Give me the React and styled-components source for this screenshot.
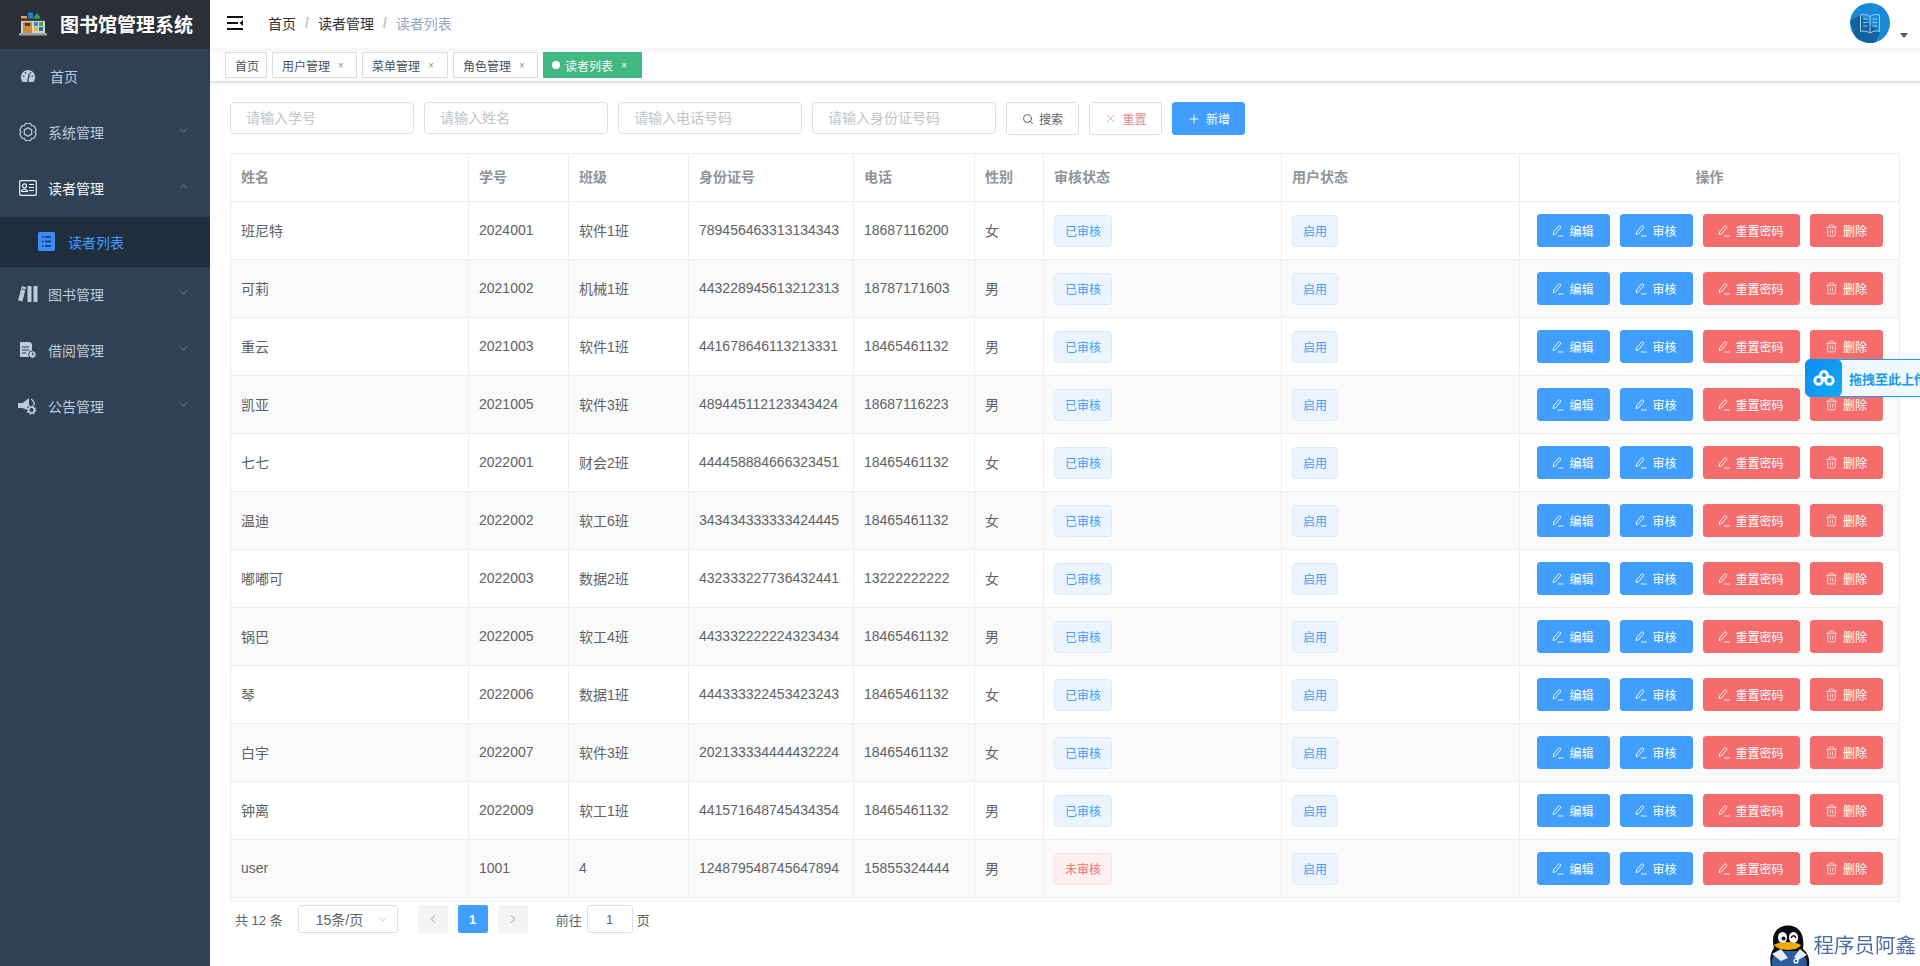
import React from "react";
import styled, { createGlobalStyle } from "styled-components";
import { ChevronDown, ChevronUp, ChevronLeft, ChevronRight, Search, X, Plus, Trash2 } from "lucide-react";

const GlobalStyle = createGlobalStyle`
  html, body {
    margin: 0;
    padding: 0;
    height: 100%;
    overflow: hidden;
    background: #fff;
    font-family: "Liberation Sans", "Noto Sans CJK SC", sans-serif;
  }
  * {
    box-sizing: border-box;
  }
`;

const readers = [
  ["班尼特", "2024001", "软件1班", "789456463313134343", "18687116200", "女", true],
  ["可莉", "2021002", "机械1班", "443228945613212313", "18787171603", "男", true],
  ["重云", "2021003", "软件1班", "441678646113213331", "18465461132", "男", true],
  ["凯亚", "2021005", "软件3班", "489445112123343424", "18687116223", "男", true],
  ["七七", "2022001", "财会2班", "444458884666323451", "18465461132", "女", true],
  ["温迪", "2022002", "软工6班", "343434333333424445", "18465461132", "女", true],
  ["嘟嘟可", "2022003", "数据2班", "432333227736432441", "13222222222", "女", true],
  ["锅巴", "2022005", "软工4班", "443332222224323434", "18465461132", "男", true],
  ["琴", "2022006", "数据1班", "444333322453423243", "18465461132", "女", true],
  ["白宇", "2022007", "软件3班", "202133334444432224", "18465461132", "女", true],
  ["钟离", "2022009", "软工1班", "441571648745434354", "18465461132", "男", true],
  ["user", "1001", "4", "124879548745647894", "15855324444", "男", false],
];

const columns = [
  ["姓名", 238],
  ["学号", 100],
  ["班级", 120],
  ["身份证号", 165],
  ["电话", 121],
  ["性别", 69],
  ["审核状态", 238],
  ["用户状态", 238],
  ["操作", 379],
];

const LogoIcon = () => (
  <svg width="30" height="24" viewBox="0 0 30 24">
    <rect x="3" y="4" width="6" height="2.5" fill="#e8a23a" />
    <rect x="10" y="0.5" width="5" height="6" fill="#2a7fc4" />
    <path d="M15 6.5 L19 1 L23 6.5 Z" fill="#2fa56b" />
    <rect x="3" y="8" width="24" height="13" fill="#d8d2c2" />
    <rect x="3" y="7" width="24" height="2" fill="#3c3c3c" />
    <rect x="5" y="10" width="9" height="11" fill="#c98a3f" />
    <rect x="7" y="11" width="5" height="3" fill="#4b3a2a" />
    <rect x="16" y="10" width="4" height="4" fill="#2a8fd0" />
    <rect x="21" y="10" width="4" height="4" fill="#3fa566" />
    <rect x="16" y="15" width="4" height="4" fill="#e4b53c" />
    <rect x="21" y="15" width="4" height="4" fill="#2a6fb0" />
    <rect x="1" y="21" width="28" height="2.5" fill="#9aa0a6" />
  </svg>
);

const DashboardIcon = () => (
  <svg width="18" height="18" viewBox="0 0 18 18">
    <path d="M3.6 15 A7.2 7.2 0 1 1 14.4 15 Z" fill="#bfcbd9" />
    <path d="M8.6 15 L10.4 7 M4 9 L5.4 9.600 M14 9 L12.600 9.600 M6 5.400 L6.900 6.600 M12 5.400 L11.100 6.600" stroke="#304156" strokeWidth="1.3" />
  </svg>
);

const GearIcon = () => (
  <svg width="18" height="20" viewBox="0 0 18 20" fill="none" stroke="#bfcbd9" strokeWidth="1.2">
    <path d="M6.500 1.500 H11.500 L12.700 3.600 L15.200 3.900 L17.200 8 L16 10 L17.200 12 L15.200 16.100 L12.700 16.400 L11.500 18.500 H6.500 L5.300 16.400 L2.800 16.100 L0.800 12 L2 10 L0.800 8 L2.800 3.900 L5.300 3.600 Z" />
    <path d="M9 5.800 L12.700 7.900 V12.100 L9 14.200 L5.300 12.100 V7.900 Z" />
  </svg>
);

const CardIcon = () => (
  <svg width="18" height="16" viewBox="0 0 18 16" fill="none" stroke="#eef1f5" strokeWidth="1.2">
    <rect x="0.7" y="0.7" width="16.6" height="14.6" rx="1" />
    <circle cx="5.5" cy="5.8" r="2" />
    <path d="M2.5 11.5 C3 8.5 8 8.5 8.5 11.5 Z M10 4.5 H15 M10 7.5 H15 M10 10.5 H15" />
  </svg>
);

const ListIcon = () => (
  <svg width="17" height="19" viewBox="0 0 17 19">
    <rect width="17" height="19" rx="1.5" fill="#3a8bff" />
    <path d="M4 5 H5.5 M7 5 H13 M4 9.5 H5.5 M7 9.5 H13 M4 14 H5.5 M7 14 H13" stroke="#1f2d3d" strokeWidth="1.3" />
  </svg>
);

const BooksIcon = () => (
  <svg width="20" height="18" viewBox="0 0 20 18" fill="#bfcbd9">
    <path d="M4 1 L8 2.2 L4.4 16.5 L0 15.2 Z" />
    <rect x="9.5" y="1" width="4" height="16" />
    <rect x="15.5" y="1" width="4" height="16" />
    <path d="M4.2 4 L7 4.8" stroke="#304156" strokeWidth="1" />
  </svg>
);

const BorrowIcon = () => (
  <svg width="18" height="18" viewBox="0 0 18 18">
    <path d="M1 1 H11 L13 3 V16 H1 Z" fill="#bfcbd9" />
    <path d="M3 6 H10 M3 9 H10 M3 12 H7" stroke="#304156" strokeWidth="1.2" />
    <circle cx="13.5" cy="13.5" r="3.8" fill="#bfcbd9" stroke="#304156" strokeWidth="1" />
    <path d="M13.5 11.5 V13.7 H15.5" stroke="#304156" strokeWidth="0.9" fill="none" />
  </svg>
);

const NoticeIcon = () => (
  <svg width="20" height="18" viewBox="0 0 20 18">
    <path d="M0 6 H4.500 L11 1 V14 L4.500 11 H0 Z" fill="#bfcbd9" />
    <path d="M13 2 C15.500 3.500 16.500 6 16 8.500" stroke="#bfcbd9" strokeWidth="1.300" fill="none" />
    <circle cx="13.500" cy="13" r="5" fill="#304156" />
    <circle cx="13.500" cy="13" r="2.900" fill="none" stroke="#bfcbd9" strokeWidth="1.700" />
    <circle cx="13.500" cy="13" r="4.200" fill="none" stroke="#bfcbd9" strokeWidth="1.300" strokeDasharray="1.600 1.700" />
  </svg>
);

const FoldIcon = () => (
  <svg width="17" height="14" viewBox="0 0 17 14">
    <path d="M0 1 H16 M0 7 H11 M0 13 H16" stroke="#111" strokeWidth="2" />
    <path d="M16 4 L12.5 7 L16 10 Z" fill="#111" />
  </svg>
);

const BookAvatar = () => (
  <svg width="40" height="40" viewBox="0 0 40 40">
    <defs>
      <clipPath id="avatar-clip">
        <circle cx="20" cy="20" r="20" />
      </clipPath>
    </defs>
    <circle cx="20" cy="20" r="20" fill="#1a8ad8" />
    <path d="M10 12 L30 30 L24 42 L6 36 L0 18 Z" fill="#14619e" clipPath="url(#avatar-clip)" />
    <g fill="none" stroke="#a9d6f5" strokeWidth="0.9">
      <path d="M10.500 12 C14 11 17 11.500 20 13.500 C23 11.500 26 11 29.500 12 V28.500 C26 27.500 23 28 20 30 C17 28 14 27.500 10.500 28.500 Z M20 13.500 V30" />
      <path d="M13 16 H17.500 M13 19.500 H17.500 M13 23 H17.500 M22.500 16 H27 M22.500 19.500 H27 M22.500 23 H27" />
    </g>
  </svg>
);

const EditIcon = () => (
  <svg width="12" height="12" viewBox="0 0 12 12" fill="none" stroke="#fff" strokeWidth="0.9">
    <path d="M1.2 9.6 L1.6 7 L6.4 1.2 C7 0.6 7.8 0.7 8.3 1.2 C8.8 1.700 8.800 2.300 8.300 3 L3.600 8.800 Z M6 11 H11.500" />
  </svg>
);

const CloudIcon = () => (
  <svg width="22" height="16" viewBox="0 0 22 16" fill="none" stroke="#fff" strokeWidth="2.8">
    <circle cx="5.600" cy="10.500" r="3.800" />
    <circle cx="16.400" cy="10.500" r="3.800" />
    <circle cx="11" cy="5" r="3.500" />
  </svg>
);

const Penguin = () => (
  <svg width="40" height="41" viewBox="0 0 40 41">
    <path d="M1 41 C-1 31 2 26 4 23 C0 8 8 0.500 18 0.500 C29 0.500 35 9 33 24 C38 28 40 34 39 41 Z" fill="#0c0c10" />
    <path d="M2 41 C1 33 4 28 9 26 L29 26 C34 28 37 34 37 41 Z" fill="#2c5c9c" />
    <path d="M2 29 L11 24 L18 33 L11 36 Z M30 24 L37 30 L28 35 L24 32 Z" fill="#e8eef5" />
    <ellipse cx="12.500" cy="12.500" rx="4.500" ry="5.500" fill="#fff" />
    <ellipse cx="23.500" cy="12.500" rx="4.500" ry="5.500" fill="#fff" />
    <circle cx="13.500" cy="13.500" r="2" fill="#111" />
    <path d="M21 13 C22 10 25 10 26 13" stroke="#111" strokeWidth="1.400" fill="none" />
    <path d="M4 20 C9 16 25 16 31 20 C27 26.500 9 26.500 4 20 Z" fill="#f2ab0c" />
    <circle cx="26" cy="36" r="2.600" fill="#fff" />
    <circle cx="26" cy="36" r="1.200" fill="#2c5c9c" />
  </svg>
);

const Layout = styled.div`
  display: flex;
  width: 100%;
  height: 100vh;
  overflow: hidden;
`;

const Sidebar = styled.aside`
  flex: 0 0 210px;
  background: #304156;
`;

const Brand = styled.div`
  display: flex;
  align-items: center;
  height: 49px;
  padding: 0 0 2px 18px;
  gap: 12px;
  background: #2b2f3a;
  color: #fff;
  font-size: 19px;
  font-weight: 700;
  white-space: nowrap;
`;

const MenuItem = styled.div`
  display: flex;
  align-items: center;
  height: 56px;
  padding: 0 0 2px 18px;
  font-size: 14px;
  color: ${(p) => (p.$open ? "#f4f4f5" : "#bfcbd9")};
`;

const MenuIconBox = styled.span`
  display: flex;
  justify-content: center;
  align-items: center;
  width: 20px;
  margin-right: ${(p) => p.$gap || 10}px;
`;

const Arrow = styled.span`
  display: flex;
  margin-left: auto;
  margin-right: 20px;
  color: #8492a3;
  transform: translateY(-2px);
`;

const SubItem = styled.div`
  display: flex;
  align-items: center;
  height: 50px;
  padding: 0 0 1px 38px;
  gap: 13px;
  background: #1f2d3d;
  color: #409eff;
  font-size: 14px;
`;

const Main = styled.main`
  flex: 1;
  min-width: 0;
  background: #fff;
`;

const Navbar = styled.header`
  display: flex;
  align-items: center;
  height: 49px;
  padding: 0 0 3px 17px;
  box-shadow: 0 1px 4px rgba(0, 21, 41, 0.08);
`;

const Crumbs = styled.nav`
  display: flex;
  align-items: center;
  margin-left: 24px;
  font-size: 14px;
  color: #303133;
`;

const CrumbSep = styled.span`
  margin: 0 9px;
  color: #c0c4cc;
  font-weight: 700;
`;

const CrumbLast = styled.span`
  color: #97a8be;
`;

const UserBox = styled.div`
  position: relative;
  display: flex;
  margin-left: auto;
  margin-right: 30px;
`;

const Caret = styled.span`
  position: absolute;
  right: -18px;
  bottom: 5px;
  border-left: 4px solid transparent;
  border-right: 4px solid transparent;
  border-top: 5px solid #555;
`;

const TagsBar = styled.div`
  display: flex;
  align-items: center;
  gap: 5px;
  height: 33px;
  padding-left: 15px;
  border-bottom: 1px solid #d8dce5;
  box-shadow: 0 1px 3px 0 rgba(0, 0, 0, 0.12), 0 0 3px 0 rgba(0, 0, 0, 0.04);
`;

const Tag = styled.span`
  display: flex;
  align-items: center;
  gap: 5px;
  height: 26px;
  width: ${(p) => p.$w}px;
  padding-left: ${(p) => (p.$active ? 8 : 9)}px;
  border: 1px solid ${(p) => (p.$active ? "#42b983" : "#d8dce5")};
  background: ${(p) => (p.$active ? "#42b983" : "#fff")};
  color: ${(p) => (p.$active ? "#fff" : "#495060")};
  font-size: 12px;
`;

const TagDot = styled.i`
  width: 8px;
  height: 8px;
  border-radius: 50%;
  background: #fff;
`;

const TagClose = styled.span`
  margin-left: 3px;
  font-size: 10px;
  color: ${(p) => (p.$active ? "#fff" : "#909399")};
`;

const Content = styled.section`
  padding: 20px 20px 0;
`;

const FilterBar = styled.div`
  display: flex;
  align-items: flex-start;
  gap: 10px;
  margin-bottom: 18px;
`;

const FilterInput = styled.input`
  width: 184px;
  height: 32px;
  padding: 0 15px;
  border: 1px solid #dcdfe6;
  border-radius: 4px;
  font-family: inherit;
  font-size: 14px;
  outline: none;

  &::placeholder {
    color: #c0c4cc;
    opacity: 1;
  }
`;

const Button = styled.button`
  display: inline-flex;
  align-items: center;
  justify-content: center;
  gap: 5px;
  width: ${(p) => p.$w || 73}px;
  height: 33px;
  padding: 0;
  border: 1px solid ${(p) => p.$border};
  border-radius: 3px;
  background: ${(p) => p.$bg};
  color: ${(p) => p.$color};
  font-family: inherit;
  font-size: 12px;
`;

const TableWrap = styled.div`
  width: 1670px;
  border: 1px solid #ebeef5;
  padding-bottom: 3px;
`;

const Table = styled.table`
  width: 100%;
  table-layout: fixed;
  border-collapse: separate;
  border-spacing: 0;
  font-size: 14px;
  color: #606266;
`;

const Th = styled.th`
  height: 48px;
  padding: 0 10px 4px;
  text-align: ${(p) => (p.$center ? "center" : "left")};
  border-right: ${(p) => (p.$last ? "none" : "1px solid #ebeef5")};
  border-bottom: 1px solid #ebeef5;
  color: #909399;
  font-weight: 700;
`;

const Tr = styled.tr`
  background: ${(p) => (p.$striped ? "#fafafa" : "#fff")};
`;

const Td = styled.td`
  height: 58px;
  padding: 0 10px;
  border-right: ${(p) => (p.$last ? "none" : "1px solid #ebeef5")};
  border-bottom: 1px solid #ebeef5;
  white-space: nowrap;
`;

const TextCell = styled(Td)`
  padding-bottom: 2px;
`;

const Status = styled.span`
  display: inline-flex;
  align-items: center;
  justify-content: center;
  width: ${(p) => p.$w}px;
  height: 32px;
  border: 1px solid ${(p) => (p.$danger ? "#fde2e2" : "#d9ecff")};
  border-radius: 4px;
  background: ${(p) => (p.$danger ? "#fef0f0" : "#ecf5ff")};
  color: ${(p) => (p.$danger ? "#f56c6c" : "#409eff")};
  font-size: 12px;
  vertical-align: middle;
`;

const Actions = styled.div`
  display: flex;
  justify-content: center;
  gap: 10px;
`;

const Pager = styled.div`
  display: flex;
  align-items: center;
  height: 28px;
  margin-top: 3px;
  padding-left: 5px;
  font-size: 13px;
  color: #606266;
`;

const PagerSelect = styled.div`
  position: relative;
  display: flex;
  align-items: center;
  width: 100px;
  height: 28px;
  margin-left: 15px;
  padding-left: 17px;
  border: 1px solid #dcdfe6;
  border-radius: 3px;
  font-size: 14px;
`;

const SelectArrow = styled.span`
  position: absolute;
  right: 7px;
  top: 6px;
  display: flex;
  color: #c0c4cc;
`;

const PageBtn = styled.span`
  display: flex;
  align-items: center;
  justify-content: center;
  width: 30px;
  height: 28px;
  margin-left: ${(p) => p.$ml || 10}px;
  border-radius: 2px;
  background: ${(p) => (p.$active ? "#409eff" : "#f4f4f5")};
  color: ${(p) => (p.$active ? "#fff" : "#c0c4cc")};
  font-weight: 700;
`;

const Jump = styled.span`
  margin-left: 28px;
`;

const JumpInput = styled.span`
  display: flex;
  align-items: center;
  justify-content: center;
  width: 46px;
  height: 28px;
  margin: 0 4px 0 5px;
  border: 1px solid #dcdfe6;
  border-radius: 3px;
`;

const UploadFloat = styled.div`
  position: fixed;
  top: 359px;
  left: 1805px;
  display: flex;
  align-items: center;
  width: 160px;
  height: 38px;
  border: 1px solid #1f9be8;
  border-radius: 6px;
  background: #eef8ff;
  color: #1a9ae6;
  font-size: 13px;
  font-weight: 700;
  white-space: nowrap;
`;

const UploadIcon = styled.span`
  display: flex;
  align-items: center;
  justify-content: center;
  flex: 0 0 37px;
  height: 38px;
  margin: -1px 7px -1px -1px;
  border-radius: 6px;
  background: linear-gradient(135deg, #0a8cf0, #15a8f5);
`;

const Watermark = styled.div`
  position: fixed;
  right: 4px;
  bottom: 0;
  display: flex;
  align-items: flex-start;
  gap: 4px;
  color: #4a6fa5;
  font-size: 20.500px;
  white-space: nowrap;
`;

const WatermarkText = styled.span`
  margin-top: 4px;
`;

const menuBefore = [
  { label: "首页", icon: <DashboardIcon />, gap: 12 },
  { label: "系统管理", icon: <GearIcon /> },
];

const menuAfter = [
  { label: "图书管理", icon: <BooksIcon /> },
  { label: "借阅管理", icon: <BorrowIcon /> },
  { label: "公告管理", icon: <NoticeIcon /> },
];

const tags = [
  { label: "首页", w: 42 },
  { label: "用户管理", w: 85, close: true },
  { label: "菜单管理", w: 86, close: true },
  { label: "角色管理", w: 85, close: true },
  { label: "读者列表", w: 99, close: true, active: true },
];

const MenuRow = ({ item }) => (
  <MenuItem>
    <MenuIconBox $gap={item.gap}>{item.icon}</MenuIconBox>
    {item.label}
    {item.gap ? null : (
      <Arrow>
        <ChevronDown size={13} strokeWidth={1.4} />
      </Arrow>
    )}
  </MenuItem>
);

const blue = { $bg: "#409eff", $border: "#409eff", $color: "#fff" };
const red = { $bg: "#f56c6c", $border: "#f56c6c", $color: "#fff" };

export default function App() {
  return (
    <>
      <GlobalStyle />
      <Layout>
        <Sidebar>
          <Brand>
            <LogoIcon />
            图书馆管理系统
          </Brand>
          {menuBefore.map((item) => (
            <MenuRow key={item.label} item={item} />
          ))}
          <MenuItem $open>
            <MenuIconBox>
              <CardIcon />
            </MenuIconBox>
            读者管理
            <Arrow>
              <ChevronUp size={13} strokeWidth={1.4} />
            </Arrow>
          </MenuItem>
          <SubItem>
            <ListIcon />
            读者列表
          </SubItem>
          {menuAfter.map((item) => (
            <MenuRow key={item.label} item={item} />
          ))}
        </Sidebar>

        <Main>
          <Navbar>
            <FoldIcon />
            <Crumbs>
              首页
              <CrumbSep>/</CrumbSep>
              读者管理
              <CrumbSep>/</CrumbSep>
              <CrumbLast>读者列表</CrumbLast>
            </Crumbs>
            <UserBox>
              <BookAvatar />
              <Caret />
            </UserBox>
          </Navbar>

          <TagsBar>
            {tags.map((tag) => (
              <Tag key={tag.label} $w={tag.w} $active={tag.active}>
                {tag.active && <TagDot />}
                {tag.label}
                {tag.close && <TagClose $active={tag.active}>×</TagClose>}
              </Tag>
            ))}
          </TagsBar>

          <Content>
            <FilterBar>
              <FilterInput placeholder="请输入学号" />
              <FilterInput placeholder="请输入姓名" />
              <FilterInput placeholder="请输入电话号码" />
              <FilterInput placeholder="请输入身份证号码" />
              <Button $bg="#fff" $border="#dcdfe6" $color="#606266">
                <Search size={12} />
                搜索
              </Button>
              <Button $bg="#fff" $border="#dcdfe6" $color="#e98a8a">
                <X size={13} strokeWidth={1.4} />
                重置
              </Button>
              <Button {...blue}>
                <Plus size={14} strokeWidth={1.6} />
                新增
              </Button>
            </FilterBar>

            <TableWrap>
              <Table>
                <colgroup>
                  {columns.map(([title, width]) => (
                    <col key={title} style={{ width }} />
                  ))}
                </colgroup>
                <thead>
                  <tr>
                    {columns.map(([title], i) => (
                      <Th key={title} $center={i === 8} $last={i === 8}>
                        {title}
                      </Th>
                    ))}
                  </tr>
                </thead>
                <tbody>
                  {readers.map((r, i) => (
                    <Tr key={r[1]} $striped={i % 2 === 1}>
                      <TextCell>{r[0]}</TextCell>
                      <TextCell>{r[1]}</TextCell>
                      <TextCell>{r[2]}</TextCell>
                      <TextCell>{r[3]}</TextCell>
                      <TextCell>{r[4]}</TextCell>
                      <TextCell>{r[5]}</TextCell>
                      <Td>
                        <Status $w={58} $danger={!r[6]}>
                          {r[6] ? "已审核" : "未审核"}
                        </Status>
                      </Td>
                      <Td>
                        <Status $w={46}>启用</Status>
                      </Td>
                      <Td $last>
                        <Actions>
                          <Button {...blue}>
                            <EditIcon />
                            编辑
                          </Button>
                          <Button {...blue}>
                            <EditIcon />
                            审核
                          </Button>
                          <Button {...red} $w={97}>
                            <EditIcon />
                            重置密码
                          </Button>
                          <Button {...red}>
                            <Trash2 size={13} strokeWidth={1.3} />
                            删除
                          </Button>
                        </Actions>
                      </Td>
                    </Tr>
                  ))}
                </tbody>
              </Table>
            </TableWrap>

            <Pager>
              共 12 条
              <PagerSelect>
                15条/页
                <SelectArrow>
                  <ChevronDown size={14} strokeWidth={1.4} />
                </SelectArrow>
              </PagerSelect>
              <PageBtn $ml={20}>
                <ChevronLeft size={14} strokeWidth={2.4} />
              </PageBtn>
              <PageBtn $active>1</PageBtn>
              <PageBtn>
                <ChevronRight size={14} strokeWidth={2.4} />
              </PageBtn>
              <Jump>前往</Jump>
              <JumpInput>1</JumpInput>
              页
            </Pager>
          </Content>
        </Main>
      </Layout>

      <UploadFloat>
        <UploadIcon>
          <CloudIcon />
        </UploadIcon>
        拖拽至此上传
      </UploadFloat>

      <Watermark>
        <Penguin />
        <WatermarkText>程序员阿鑫</WatermarkText>
      </Watermark>
    </>
  );
}
